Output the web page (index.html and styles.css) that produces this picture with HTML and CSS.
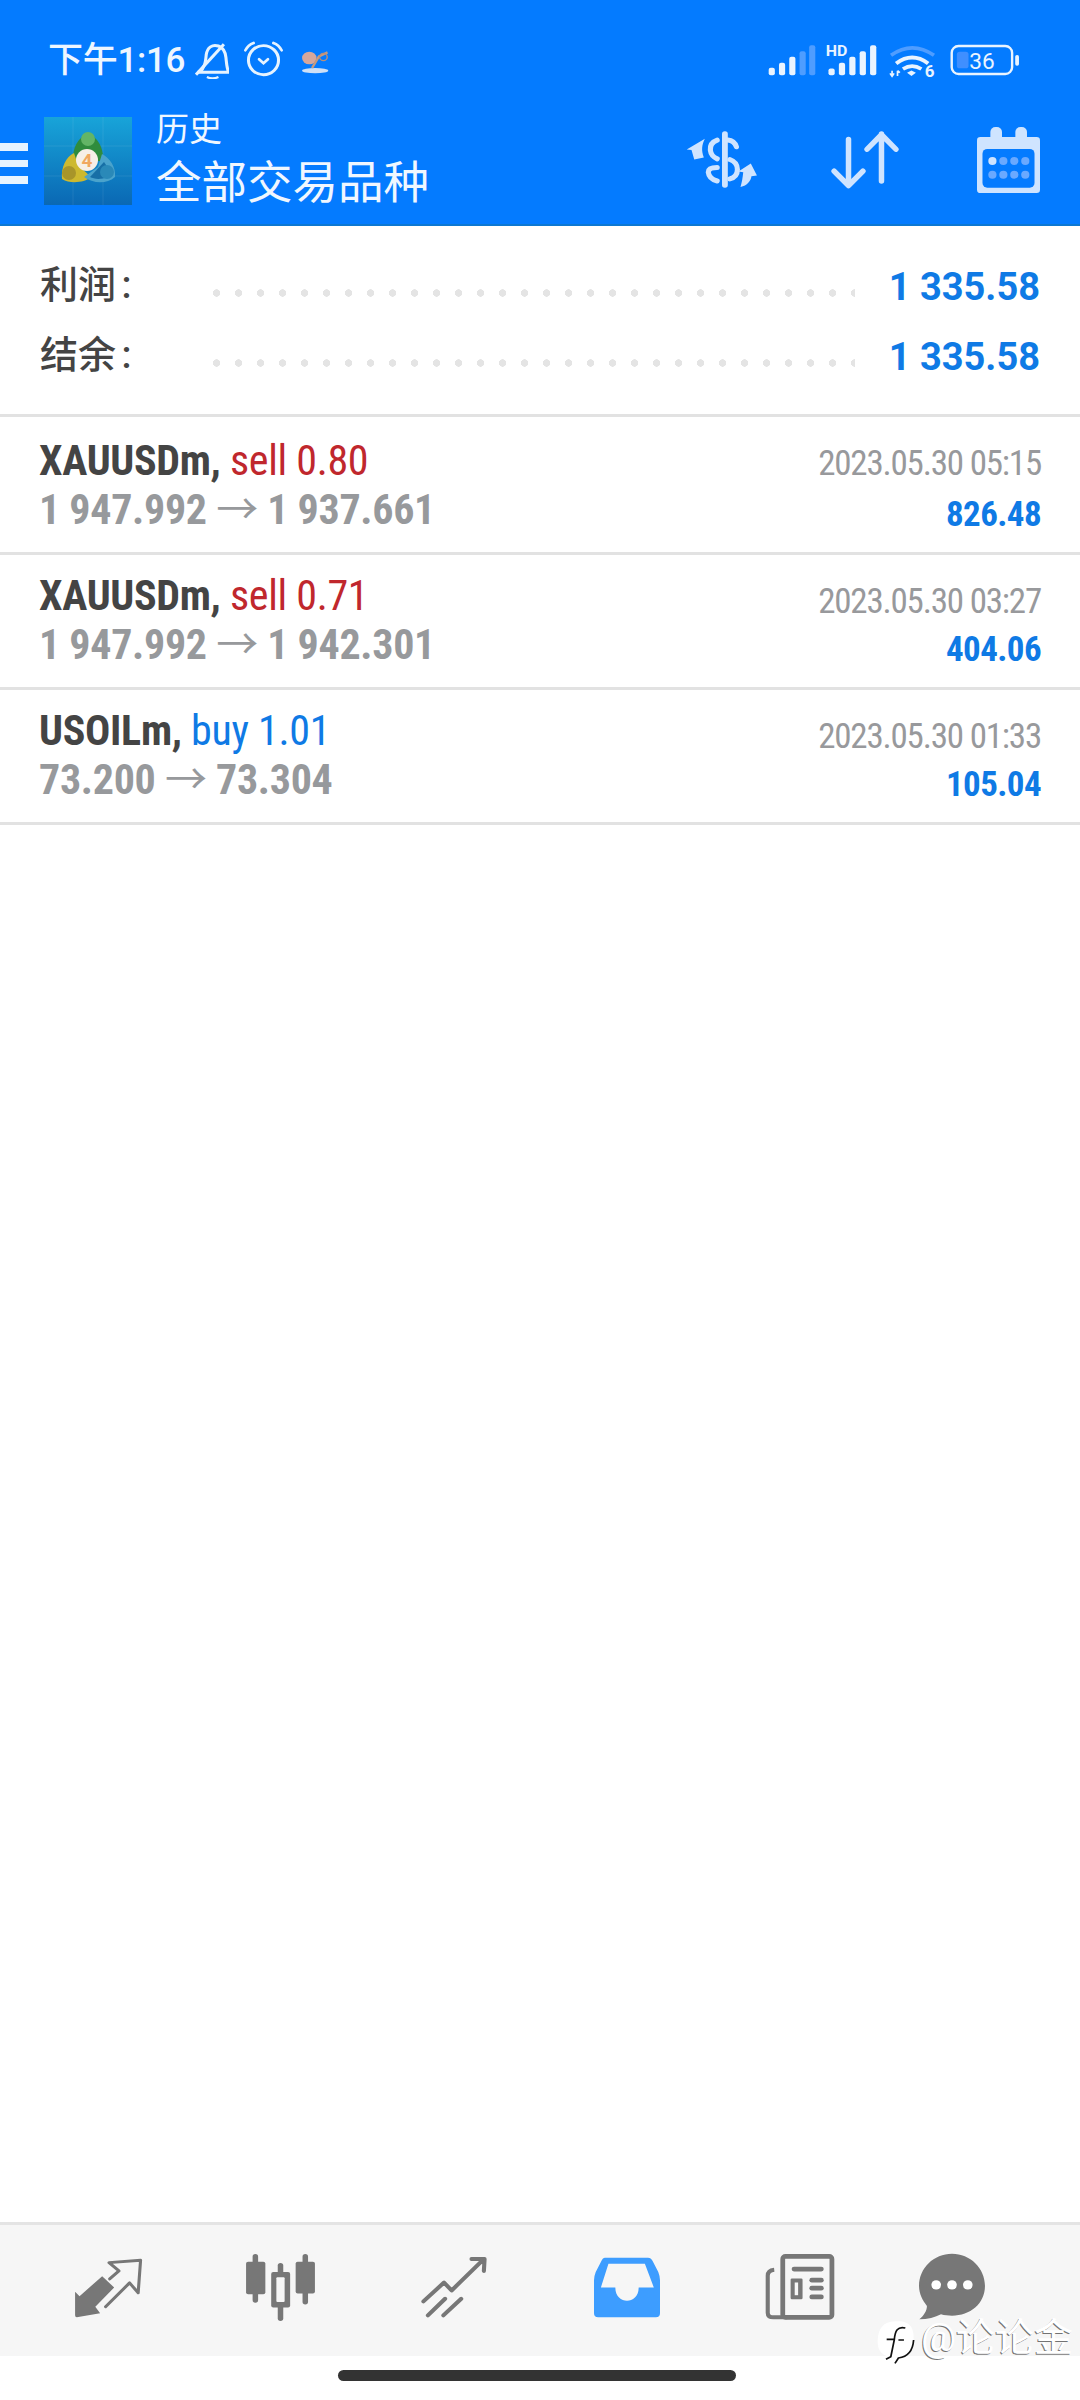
FILE: index.html
```html
<!DOCTYPE html>
<html lang="zh">
  <head>
    <meta charset="utf-8" />
    <title>历史</title>
    <link rel="stylesheet" href="styles.css">
  </head>
  <body>
    <div class="screen">
      <header class="top">
        <div class="status">
          <div class="status-left">
            <span class="clock">下午1:16</span>
            <svg class="ic-bell" viewBox="565 125 100 110" preserveAspectRatio="none"><path d="M578 215c16-14 18-30 20-52 3-22 18-32 36-26 14 5 20 16 22 34 2 18 2 30 8 44H572" fill="none" stroke="#e6f3ff" stroke-width="9" stroke-linejoin="round"/><path d="M568 222 650 132" stroke="#e6f3ff" stroke-width="9"/><path d="M600 229q16 8 34 0" fill="none" stroke="#e6f3ff" stroke-width="7"/></svg>
            <svg class="ic-alarm" viewBox="705 122 120 112" preserveAspectRatio="none"><circle cx="765" cy="180" r="44" fill="none" stroke="#e6f3ff" stroke-width="9"/><path d="M712 150q8-16 24-22M818 150q-8-16-24-22" fill="none" stroke="#e6f3ff" stroke-width="8" stroke-linecap="round"/><path d="M752 177l13 12 13-12" fill="none" stroke="#e6f3ff" stroke-width="8" stroke-linecap="round"/></svg>
            <svg class="ic-pet" viewBox="870 148 90 78" preserveAspectRatio="none"><ellipse cx="914" cy="213" rx="38" ry="8" fill="#cfe0f6"/><ellipse cx="897" cy="175" rx="21" ry="19" fill="#d6a79c"/><path d="M905 205 925 170 950 158" fill="none" stroke="#c69a80" stroke-width="7"/><circle cx="938" cy="172" r="11" fill="none" stroke="#b98f7a" stroke-width="4"/></svg>
          </div>
          <div class="status-right">
            <svg class="ic-signal" viewBox="665 130 140 100" preserveAspectRatio="none">
              <rect x="667" y="205" width="18" height="23" rx="6" fill="#eaf4ff"/><rect x="697" y="190" width="18" height="38" rx="6" fill="#eaf4ff"/><rect x="727" y="172" width="18" height="56" rx="6" fill="#eaf4ff"/><rect x="757" y="155" width="18" height="73" rx="6" fill="#4f9dff"/><rect x="785" y="137" width="18" height="91" rx="6" fill="#4f9dff"/>
            </svg>
            <svg class="ic-signal-hd" viewBox="830 130 150 100" preserveAspectRatio="none">
              <text x="832" y="168" class="hd">HD</text>
              <rect x="840" y="207" width="18" height="21" rx="6" fill="#eaf4ff"/><rect x="870" y="190" width="18" height="38" rx="6" fill="#eaf4ff"/><rect x="900" y="172" width="18" height="56" rx="6" fill="#eaf4ff"/><rect x="930" y="155" width="18" height="73" rx="6" fill="#eaf4ff"/><rect x="960" y="137" width="18" height="91" rx="6" fill="#eaf4ff"/>
            </svg>
            <svg class="ic-wifi" viewBox="1015 130 138 106" preserveAspectRatio="none">
              <path d="M1021 167q62-45 126 0" fill="none" stroke="#4f9dff" stroke-width="11"/>
              <path d="M1036 192q47-36 94 0" fill="none" stroke="#eaf4ff" stroke-width="12"/>
              <path d="M1056 209q27-18 54 0" fill="none" stroke="#eaf4ff" stroke-width="11"/>
              <path d="M1068 220l13-7 13 7-13 10z" fill="#eaf4ff"/>
              <path d="M1024 214v16M1040 214v16M1018 222l6 9 6-9M1040 214l7 6" fill="none" stroke="#eaf4ff" stroke-width="5"/>
              <text x="1120" y="233" class="wifi-six">6</text>
            </svg>
            <svg class="ic-batt" viewBox="1192 132 204 96" preserveAspectRatio="none">
              <rect x="1197" y="138" width="176" height="84" rx="20" fill="none" stroke="#eaf4ff" stroke-width="7"/>
              <rect x="1212" y="155" width="34" height="50" rx="8" fill="#3f8fff"/>
              <text x="1285" y="206" class="batt-num">36</text>
              <rect x="1382" y="165" width="11" height="32" rx="5" fill="#eaf4ff"/>
            </svg>
          </div>
        </div>
        <div class="appbar">
          <div class="burger"><span></span><span></span><span></span></div>
          <svg class="mt-logo" viewBox="0 0 88 88">
            <defs>
              <linearGradient id="logoBg" x1="0" y1="0" x2="0" y2="1"><stop offset="0" stop-color="#18a4d9"/><stop offset="1" stop-color="#0a68b4"/></linearGradient>
            </defs>
            <rect width="88" height="88" fill="url(#logoBg)"/>
            <path d="M0 29H88M0 59H88M29 0V88M59 0V88" stroke="#fff" stroke-opacity=".08"/>
            <path d="M44 18C52 18 60 30 59 44H29C28 30 36 18 44 18z" fill="#2f8c3d"/>
            <circle cx="44" cy="22" r="7" fill="#62b566"/>
            <path d="M30 36C22 40 17 50 18 62 26 67 40 66 47 60L34 48z" fill="#cdb92f"/>
            <circle cx="25" cy="56" r="7" fill="#a8952a"/>
            <path d="M58 37C66 41 72 50 71 60 62 68 48 66 40 60L54 50z" fill="#4aa3cc"/>
            <path d="M60 45C64 50 65 55 64 60 56 63 50 62 46 60z" fill="#176fa6"/>
            <circle cx="63" cy="55" r="7" fill="#2a89b8"/>
            <circle cx="43" cy="43" r="11" fill="#f6efe6"/>
            <text x="43" y="50" class="logo-four">4</text>
          </svg>
          <div class="titles">
            <div class="title-small">历史</div>
            <div class="title-big">全部交易品种</div>
          </div>
          <div class="actions">
            <svg class="ic-dollar" viewBox="420 390 216 176" preserveAspectRatio="none">
              <rect x="528" y="394" width="17" height="168" rx="8" fill="#cfe4ff"/>
              <path d="M570 440q-6-18-25-20M514 420q-22 8-20 30 2 18 20 26M551 478q22 8 22 30 0 22-22 28M514 502q-26 0-26 14 2 20 26 26" fill="none" stroke="#cfe4ff" stroke-width="15" stroke-linecap="round"/>
              <path d="M478 416 425 448l14 2 8 28 28-6c-8-22-6-38 3-56z" fill="#cfe4ff"/>
              <path d="M582 560c20-4 30-18 32-32l16 -2-18-36-36 24 14 2c-2 18-4 30-8 44z" fill="#cfe4ff"/>
            </svg>
            <svg class="ic-sort" viewBox="845 392 198 178" preserveAspectRatio="none">
              <path d="M896 420V558M854 516l42 44 42-44M992 546V404M950 450l42-44 42 44" fill="none" stroke="#cfe4ff" stroke-width="16" stroke-linecap="round" stroke-linejoin="round"/>
            </svg>
            <svg class="ic-cal" viewBox="1268 380 184 198" preserveAspectRatio="none">
              <rect x="1268" y="410" width="184" height="168" rx="10" fill="#cfe4ff"/>
              <rect x="1307" y="380" width="34" height="46" rx="15" fill="#cfe4ff"/>
              <rect x="1380" y="380" width="34" height="46" rx="15" fill="#cfe4ff"/>
              <rect x="1284" y="446" width="152" height="116" rx="14" fill="#047bff"/>
              <g fill="#6aa9ff"><circle cx="1345" cy="482" r="12"/><circle cx="1377" cy="482" r="12"/><circle cx="1409" cy="482" r="12"/><circle cx="1313" cy="523" r="12"/><circle cx="1345" cy="523" r="12"/><circle cx="1377" cy="523" r="12"/><circle cx="1409" cy="523" r="12"/></g>
              <circle cx="1313" cy="482" r="12" fill="#cfe4ff"/>
            </svg>
          </div>
        </div>
      </header>

      <section class="summary">
        <div class="sum-row"><span class="sum-label">利润 :</span><span class="leader"></span><span class="sum-value">1 335.58</span></div>
        <div class="sum-row"><span class="sum-label">结余 :</span><span class="leader"></span><span class="sum-value">1 335.58</span></div>
      </section>

      <section class="deals">
        <div class="deal">
          <div class="deal-main">
            <div class="line-top"><b class="sym">XAUUSDm,</b> <span class="sell">sell 0.80</span></div>
            <div class="line-price">1 947.992 <span class="arrow">→</span> 1 937.661</div>
          </div>
          <div class="deal-side"><div class="date">2023.05.30 05:15</div><div class="profit">826.48</div></div>
        </div>
        <div class="deal">
          <div class="deal-main">
            <div class="line-top"><b class="sym">XAUUSDm,</b> <span class="sell">sell 0.71</span></div>
            <div class="line-price">1 947.992 <span class="arrow">→</span> 1 942.301</div>
          </div>
          <div class="deal-side"><div class="date">2023.05.30 03:27</div><div class="profit">404.06</div></div>
        </div>
        <div class="deal">
          <div class="deal-main">
            <div class="line-top"><b class="sym">USOILm,</b> <span class="buy">buy 1.01</span></div>
            <div class="line-price">73.200 <span class="arrow">→</span> 73.304</div>
          </div>
          <div class="deal-side"><div class="date">2023.05.30 01:33</div><div class="profit">105.04</div></div>
        </div>
      </section>

      <div class="spacer"></div>

      <nav class="tabs">
        <svg class="tab-trade" viewBox="210 170 210 190" preserveAspectRatio="none">
          <path d="M298 228 333 262 278 320 292 340 224 352Q219 352 219 346V275L232 288z" fill="#777"/>
          <path d="M320 236 347 212 318 187 410 180 403 278 378 248 308 320" fill="none" stroke="#777" stroke-width="9" stroke-linejoin="round" stroke-linecap="round"/>
        </svg>
        <svg class="tab-chart" viewBox="710 160 212 208" preserveAspectRatio="none">
          <g fill="#777">
            <rect x="735" y="163" width="16" height="147" rx="8"/><rect x="716" y="186" width="56" height="98" rx="6"/>
            <rect x="808" y="190" width="16" height="175" rx="8"/><rect x="789" y="217" width="55" height="107" rx="6"/>
            <rect x="880" y="163" width="16" height="152" rx="8"/><rect x="860" y="186" width="56" height="96" rx="6"/>
          </g>
          <rect x="804" y="233" width="24" height="75" rx="3" fill="#f6f6f6"/>
        </svg>
        <svg class="tab-trend" viewBox="1220 165 198 190" preserveAspectRatio="none">
          <path d="M1230 305 1290 248 1312 272 1405 178M1370 177H1408L1406 213M1243 347 1293 297M1288 347 1340 297" fill="none" stroke="#777" stroke-width="12" stroke-linecap="round" stroke-linejoin="round"/>
        </svg>
        <svg class="tab-inbox" viewBox="158 170 192 184" preserveAspectRatio="none">
          <path d="M190 172H315Q325 172 330 185L345 215Q350 228 350 240V340Q350 352 338 352H170Q158 352 158 340V240Q158 228 163 215L178 185Q183 172 190 172z" fill="#3d9dff"/>
          <path d="M200 190H306L332 262H288C288 290 270 302 254 302 238 302 220 290 220 262H178z" fill="#f6f6f6"/>
        </svg>
        <svg class="tab-news" viewBox="655 160 205 200" preserveAspectRatio="none">
          <rect x="707" y="170" width="144" height="182" rx="8" fill="none" stroke="#777" stroke-width="14"/>
          <path d="M682 210Q663 212 663 228V338Q663 352 680 352H720" fill="none" stroke="#777" stroke-width="12"/>
          <g fill="#777"><rect x="733" y="201" width="94" height="14" rx="7"/><rect x="785" y="234" width="42" height="14" rx="7"/><rect x="785" y="258" width="42" height="14" rx="7"/><rect x="785" y="284" width="42" height="14" rx="7"/><rect x="730" y="236" width="35" height="62" rx="4"/></g>
          <rect x="742" y="248" width="10" height="38" fill="#f6f6f6"/>
        </svg>
        <svg class="tab-chat" viewBox="1100 160 198 200" preserveAspectRatio="none">
          <path d="M1199 162C1252 162 1295 205 1295 258 1295 311 1252 347 1199 347 1188 347 1177 346 1167 343 1150 352 1128 358 1104 358 1118 345 1126 332 1126 318 1114 302 1103 282 1103 258 1103 205 1146 162 1199 162z" fill="#777"/>
          <g fill="#fff"><circle cx="1153" cy="255" r="14"/><circle cx="1199" cy="255" r="14"/><circle cx="1245" cy="255" r="14"/></g>
        </svg>
      </nav>
      <div class="home-area"><span class="home-bar"></span></div>

      <div class="watermark">
        <svg class="wm-logo" viewBox="978 360 110 135" preserveAspectRatio="none">
          <path d="M1030 364C1075 360 1086 385 1084 420 1082 455 1058 472 1030 472 992 472 978 450 980 420 982 385 996 366 1030 364z" fill="#fff"/>
          <path d="M1060 384C1038 378 1030 392 1028 420L1018 470 1004 478M1006 418H1026M1040 420H1056M1084 420C1082 450 1070 470 1040 474L1030 490" fill="none" stroke="#111" stroke-width="5"/>
        </svg>
        <span class="wm-text">@论论金</span>
      </div>
    </div>
  </body>
</html>
```
FILE: styles.css
```css
html, body {
  margin: 0;
  padding: 0;
  background: #fff;
}
svg {
  display: block;
  flex: none;
}
.screen {
  position: relative;
  width: 1080px;
  height: 2400px;
  display: flex;
  flex-direction: column;
  overflow: hidden;
  font-family: Roboto, "Noto Sans CJK SC", sans-serif;
}

/* header */
.top {
  height: 226px;
  box-sizing: border-box;
  background: #047bff;
  border-bottom: 2px solid #0d78d2;
  color: #eef6ff;
}
.status {
  height: 110px;
  box-sizing: border-box;
  padding: 40px 60px 0 48px;
  display: flex;
  justify-content: space-between;
  align-items: flex-start;
}
.status-left {
  display: flex;
  align-items: flex-start;
}
.clock {
  font-size: 35px;
  font-weight: 500;
  line-height: 38px;
  letter-spacing: -.3px;
  margin-top: 2px;
  width: 147px;
  white-space: nowrap;
}
.ic-bell { width: 34px; height: 37px; margin-top: 2px; }
.ic-alarm { width: 41px; height: 37px; margin: 1px 0 0 14px; }
.ic-pet { width: 31px; height: 26px; margin: 9px 0 0 16px; }
.status-right {
  display: flex;
  align-items: flex-start;
}
.ic-signal { width: 48px; height: 33px; margin-top: 3px; }
.ic-signal-hd { width: 52px; height: 33px; margin: 3px 0 0 9px; }
.ic-wifi { width: 47px; height: 35px; margin: 3px 0 0 12px; }
.ic-batt { width: 70px; height: 32px; margin: 4px 0 0 14px; }
.hd { font: 700 46px Roboto, sans-serif; fill: #eaf4ff; }
.wifi-six { font: 700 50px Roboto, sans-serif; fill: #eaf4ff; }
.batt-num { font: 400 66px Roboto, sans-serif; fill: #eaf4ff; text-anchor: middle; }
.logo-four { font: 700 19px Roboto, sans-serif; fill: #f0a860; text-anchor: middle; }

.appbar {
  height: 114px;
  display: flex;
  align-items: flex-start;
}
.burger {
  width: 28px;
  margin-top: 33px;
  display: flex;
  flex-direction: column;
  gap: 9px;
}
.burger span {
  height: 7.5px;
  background: #e6f3ff;
}
.mt-logo {
  width: 88px;
  height: 88px;
  margin: 7px 0 0 16px;
}
.titles {
  margin-left: 24px;
  color: #f0f7ff;
}
.title-small {
  font-size: 33px;
  line-height: 40px;
}
.title-big {
  font-size: 45.5px;
  line-height: 52px;
  margin-top: 8px;
  white-space: nowrap;
}
.actions {
  margin-left: auto;
  margin-right: 40px;
  display: flex;
  align-items: flex-start;
}
.ic-dollar { width: 74px; height: 59px; margin-top: 20px; }
.ic-sort { width: 68px; height: 59px; margin: 20px 0 0 72px; }
.ic-cal { width: 63px; height: 66px; margin: 17px 0 0 78px; }

/* summary */
.summary {
  height: 191px;
  box-sizing: border-box;
  padding-top: 37px;
  border-bottom: 3px solid #e2e2e2;
}
.sum-row {
  height: 70px;
  padding: 0 40px;
  display: flex;
  align-items: flex-start;
}
.sum-label {
  width: 173px;
  font-size: 38px;
  font-weight: 500;
  line-height: 44px;
  word-spacing: -4px;
  color: #444;
  white-space: nowrap;
}
.leader {
  flex: 1;
  height: 8px;
  margin-top: 26px;
  background: radial-gradient(circle at 3.6px 4px, #e4e4e4 3.5px, transparent 3.9px) 0 0 / 22px 8px repeat-x;
}
.sum-value {
  width: 185px;
  margin-top: 1px;
  text-align: right;
  font-size: 38px;
  line-height: 46px;
  font-weight: 700;
  color: #0f7ae5;
  white-space: nowrap;
}

/* deals */
.deal {
  height: 135px;
  box-sizing: border-box;
  padding: 17px 39px 0 39px;
  display: flex;
  justify-content: space-between;
  border-bottom: 3px solid #e2e2e2;
}
.deal:first-child {
  height: 138px;
  padding-top: 20px;
}
.line-top,
.line-price {
  font-stretch: condensed;
  font-size: 42px;
  letter-spacing: -.3px;
  line-height: 48px;
  white-space: nowrap;
  font-family: "Roboto Condensed", "Liberation Sans Narrow", Roboto, sans-serif;
}
.sym {
  color: #444;
  font-weight: 700;
}
.sell { color: #c0272d; }
.buy { color: #0f7ae5; }
.line-price {
  color: #97999c;
  font-weight: 700;
}
.arrow {
  font-family: "Noto Sans CJK SC", sans-serif;
  font-weight: 400;
  font-stretch: normal;
  line-height: 1;
}
.deal-side {
  padding-top: 6px;
  text-align: right;
  font-family: "Roboto Condensed", "Liberation Sans Narrow", Roboto, sans-serif;
  font-stretch: condensed;
  white-space: nowrap;
}
.deal:first-child .deal-side {
  padding-top: 3px;
}
.deal:first-child .profit {
  margin-top: 3px;
}
.date {
  font-size: 35px;
  letter-spacing: -1.2px;
  line-height: 48px;
  color: #98999c;
}
.profit {
  font-size: 35px;
  letter-spacing: -.6px;
  line-height: 48px;
  font-weight: 700;
  color: #0f7ae5;
}

.spacer {
  flex: 1;
}

/* bottom nav */
.tabs {
  height: 134px;
  box-sizing: border-box;
  background: #f6f6f6;
  border-top: 3px solid #e4e4e4;
  padding-left: 72px;
  display: grid;
  grid-template-columns: 172px 175.5px 174.4px 171px 153.4px 80px;
  align-items: start;
}
.tab-trade { width: 72px; height: 63px; margin-top: 32px; }
.tab-chart { width: 73px; height: 69px; margin-top: 28px; }
.tab-trend { width: 68px; height: 63px; margin-top: 30px; }
.tab-inbox { width: 66px; height: 61px; margin-top: 32px; }
.tab-news { width: 70px; height: 67px; margin-top: 28px; }
.tab-chat { width: 68px; height: 67px; margin-top: 28px; }
.home-area {
  height: 44px;
  padding: 14px 6px 0 0;
  box-sizing: border-box;
  display: flex;
  justify-content: center;
}
.home-bar {
  width: 398px;
  height: 11px;
  border-radius: 6px;
  background: #333;
}
.watermark {
  position: absolute;
  left: 877px;
  top: 2316px;
  display: flex;
  align-items: flex-start;
}
.wm-logo { width: 38px; height: 45px; margin-top: 4px; }
.wm-text {
  margin-left: 6px;
  font-size: 39px;
  line-height: 44px;
  color: #fff;
  text-shadow: -1px 1px 0 rgba(0, 0, 0, .55);
  white-space: nowrap;
}
```
